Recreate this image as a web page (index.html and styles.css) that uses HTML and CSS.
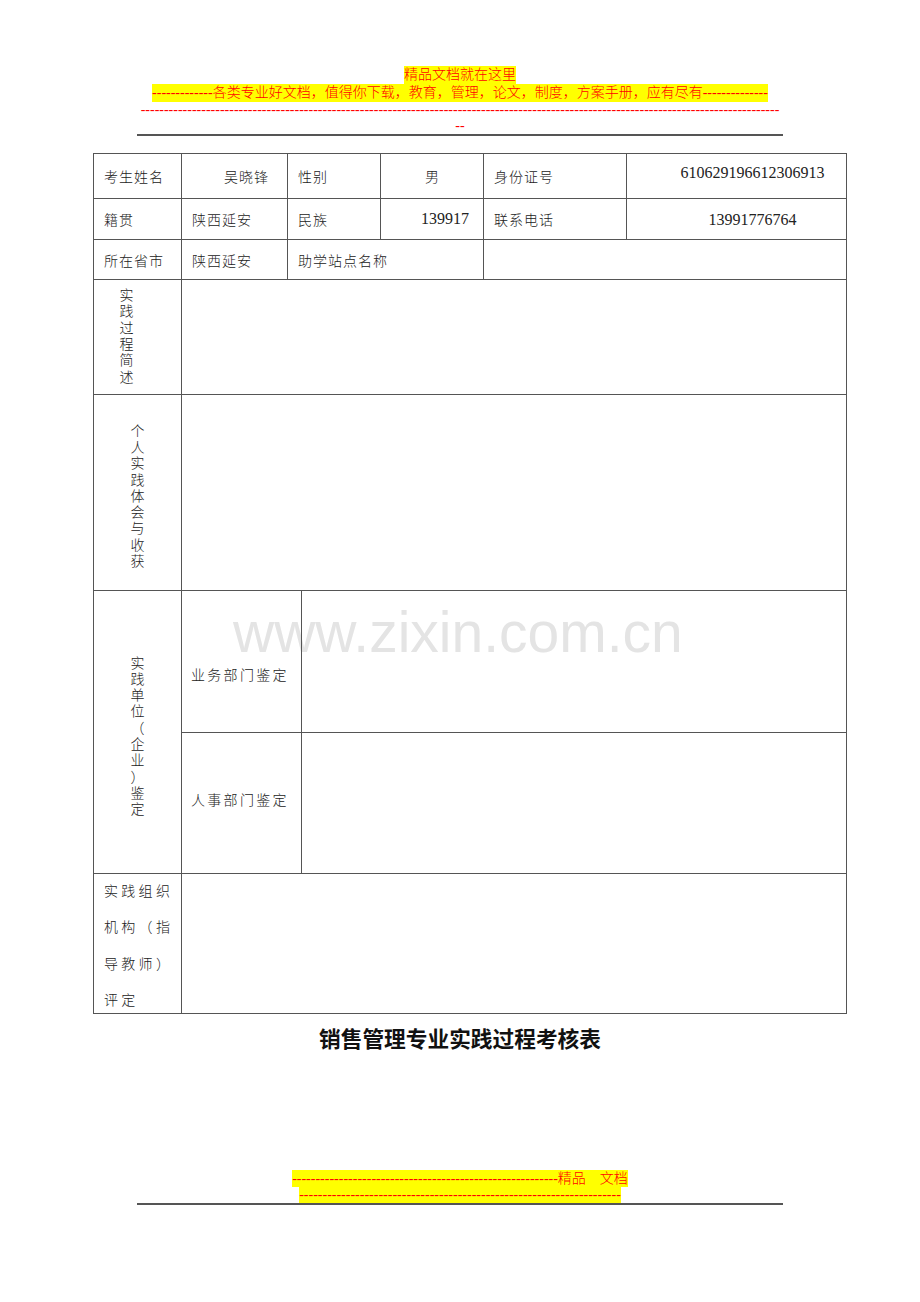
FILE: index.html
```html
<!DOCTYPE html>
<html lang="zh">
<head>
<meta charset="utf-8">
<title>销售管理专业实践过程考核表</title>
<link rel="stylesheet" href="styles.css">
</head>
<body>
<div class="page">
  <div class="head">
    <div class="hl-line"><span class="hl">精品文档就在这里</span></div>
    <div class="hl-line"><span class="hl">-------------各类专业好文档，值得你下载，教育，管理，论文，制度，方案手册，应有尽有--------------</span></div>
    <div class="dash-row">-----------------------------------------------------------------------------------------------------------------------------------------<br>--</div>
    <div class="rule"></div>
  </div>

  <div class="watermark">www.zixin.com.cn</div>

  <table class="form">
    <colgroup>
      <col class="c1"><col class="c2"><col class="c3"><col class="c4"><col class="c5"><col class="c6"><col class="c7">
    </colgroup>
    <tr class="r1">
      <td>考生姓名</td>
      <td class="name">吴晓锋</td>
      <td colspan="2">性别</td>
      <td class="center">男</td>
      <td>身份证号</td>
      <td class="num id">610629196612306913</td>
    </tr>
    <tr class="r2">
      <td>籍贯</td>
      <td>陕西延安</td>
      <td colspan="2">民族</td>
      <td class="num right">139917</td>
      <td>联系电话</td>
      <td class="num phone">13991776764</td>
    </tr>
    <tr class="r3">
      <td>所在省市</td>
      <td>陕西延安</td>
      <td colspan="3">助学站点名称</td>
      <td colspan="2"></td>
    </tr>
    <tr class="r4">
      <td class="vcell v-left"><div class="vt">实践过程简述</div></td>
      <td colspan="6"></td>
    </tr>
    <tr class="r5">
      <td class="vcell v-down"><div class="vt">个人实践体会与收获</div></td>
      <td colspan="6"></td>
    </tr>
    <tr class="r6">
      <td class="vcell v-unit" rowspan="2"><div class="vt">实践单位（企业）鉴定</div></td>
      <td colspan="2" class="dept dept-a">业务部门鉴定</td>
      <td colspan="4"></td>
    </tr>
    <tr class="r7">
      <td colspan="2" class="dept dept-b">人事部门鉴定</td>
      <td colspan="4"></td>
    </tr>
    <tr class="r8">
      <td class="org"><div class="org-text">实践组织<br>机构（指<br>导教师）<br>评定</div></td>
      <td colspan="6"></td>
    </tr>
  </table>

  <h1 class="title">销售管理专业实践过程考核表</h1>

  <div class="foot">
    <div class="foot-line1"><span class="hl2">---------------------------------------------------------精品　文档</span></div>
    <div class="foot-line2"><span class="hl3">---------------------------------------------------------------------</span></div>
    <div class="rule"></div>
  </div>
</div>
</body>
</html>
```

FILE: styles.css
```css
html, body {
  margin: 0;
  padding: 0;
}

html {
  background: #fff;
}

.page {
  width: 920px;
  font-family: "Liberation Serif", "Noto Sans CJK SC", serif;
  font-weight: 300;
  color: #222;
}

.head {
  padding-top: 66px;
  text-align: center;
  color: #ff0000;
  font-size: 14px;
  text-spacing-trim: space-all;
}

.hl-line {
  line-height: 18px;
  height: 18px;
}

.hl {
  display: inline-block;
  vertical-align: top;
  background: #ffff00;
  line-height: 18px;
  white-space: nowrap;
}

.dash-row {
  line-height: 16px;
  white-space: nowrap;
}

.rule {
  width: 646px;
  margin: 0 auto;
  border-top: 2px solid #555;
}

.watermark {
  position: absolute;
  left: 233px;
  top: 604px;
  z-index: 0;
  font-family: "Liberation Sans", Arial, sans-serif;
  font-weight: normal;
  font-size: 57px;
  line-height: 1;
  color: #e4e4e4;
  white-space: nowrap;
}

.form {
  position: relative;
  z-index: 1;
  margin: 17px 0 0 93px;
  border-collapse: collapse;
  table-layout: fixed;
  width: 753px;
  font-size: 14px;
  color: #222;
  text-spacing-trim: space-all;
}

.c1 { width: 88px; }
.c2 { width: 106px; }
.c3 { width: 14px; }
.c4 { width: 79px; }
.c5 { width: 103px; }
.c6 { width: 143px; }
.c7 { width: 220px; }

.form td {
  border: 1px solid #555;
  padding: 0 0 0 10px;
  letter-spacing: 1px;
  vertical-align: middle;
  white-space: nowrap;
  overflow: visible;
}

.r1 { height: 45px; }
.r2 { height: 41px; }
.r3 { height: 40px; }
.r4 { height: 115px; }
.r5 { height: 196px; }
.r6 { height: 142px; }
.r7 { height: 141px; }
.r8 { height: 140px; }

.form td.name { padding-left: 42px; }
.form td.center { text-align: center; padding: 0; letter-spacing: 0; }
.form td.num {
  font-size: 16px;
  letter-spacing: 0;
}
.form td.right { text-align: right; padding: 0 14px 0 0; }
.form td.id { text-align: center; padding: 0 0 7px 32px; }
.form td.phone { text-align: center; padding: 2px 0 0 32px; }

.form td.vcell {
  text-align: center;
  padding: 0;
  white-space: normal;
  letter-spacing: 0;
}
.form td.v-left { padding-right: 22px; }
.form td.v-down { padding-top: 9px; }
.form td.v-unit { padding-top: 10px; }

.vt {
  display: inline-block;
  width: 15px;
  line-height: 16.3px;
  word-break: break-all;
  line-break: anywhere;
  white-space: normal;
}

.form td.dept {
  padding-left: 9px;
  letter-spacing: 2.3px;
}
.form td.dept-a { padding-top: 24px; }
.form td.dept-b { padding-bottom: 9px; }

.form td.org {
  vertical-align: top;
  padding-left: 10px;
  letter-spacing: 3.3px;
}

.org-text {
  height: 139px;
  line-height: 36.3px;
  white-space: nowrap;
}

.title {
  margin: 9px 0 0;
  text-align: center;
  font-family: "Noto Sans CJK SC", "Liberation Sans", sans-serif;
  font-size: 21.7px;
  font-weight: bold;
  line-height: 30px;
  color: #111;
}

.foot {
  margin-top: 117px;
  text-align: center;
  color: #ff0000;
  font-size: 14px;
  text-spacing-trim: space-all;
}

.foot-line1 {
  height: 17px;
  line-height: 17px;
}

.foot-line2 {
  height: 16px;
  line-height: 16px;
}

.hl2, .hl3 {
  display: inline-block;
  vertical-align: top;
  background: #ffff00;
  white-space: nowrap;
}

.hl2 { line-height: 17px; }
.hl3 { line-height: 16px; }
```
